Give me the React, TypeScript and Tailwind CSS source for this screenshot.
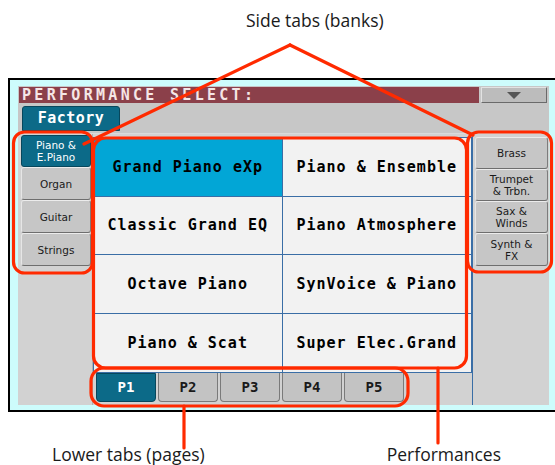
import React from "react";

const mono = { fontFamily: '"DejaVu Sans Mono", "Liberation Mono", monospace' };
const sans = { fontFamily: '"DejaVu Sans", "Liberation Sans", sans-serif' };
const label = { fontFamily: '"Open Sans", "Noto Sans", sans-serif' };

const perfs = [
  ["Grand Piano eXp", "Piano & Ensemble"],
  ["Classic Grand EQ", "Piano Atmosphere"],
  ["Octave Piano", "SynVoice & Piano"],
  ["Piano & Scat", "Super Elec.Grand"],
];

function SideTab({ lines, selected }: { lines: string[]; selected?: boolean }) {
  return (
    <div
      className={
        "flex flex-col items-center justify-center rounded-[3px] border text-[10.5px] leading-[12px] " +
        (selected
          ? "bg-[#0c6a88] border-[#07475c] text-white"
          : "bg-[#c6c6c6] border-t-[#ececec] border-l-[#e6e6e6] border-r-[#7c7c7c] border-b-[#6e6e6e] text-[#1a1a1a]")
      }
      style={sans}
    >
      {lines.map((l) => (
        <span key={l} className="block">
          {l}
        </span>
      ))}
    </div>
  );
}

export default function App() {
  return (
    <div className="relative w-[555px] h-[465px] overflow-hidden bg-white">
      {/* top caption */}
      <div className="h-[78px] pl-[246px] pt-[7px] text-[17.5px] text-[#1a1a1a]" style={label}>
        Side tabs (banks)
      </div>

      {/* screen */}
      <div className="ml-[8px] w-[560px] border-2 border-black bg-[#cdfcfc] pt-[6px] pl-[8px] pb-[5px] pr-[6px]">
        <div className="h-[319px] w-[531px] bg-[#c7c7c7] flex flex-col">
          {/* title row */}
          <div className="flex mt-[1px] ml-[1px] h-[16px]">
            <div
              className="w-[460px] h-full bg-[#8b404a] text-[#f5e6e6] font-bold text-[15px] leading-[16px] pl-[3px] tracking-[3.3px]"
              style={mono}
            >
              PERFORMANCE SELECT:
            </div>
            <div className="ml-[2px] w-[66px] h-full bg-[#bcbcbc] border-t border-l border-[#e2e2e2] border-r border-b border-r-[#6a6a6a] border-b-[#6a6a6a] flex items-center justify-center">
              <svg width="14" height="7" viewBox="0 0 14 7">
                <polygon points="0,0 14,0 7,7" fill="#555" />
              </svg>
            </div>
          </div>

          {/* factory tab row */}
          <div className="mt-[3px] ml-[4px] h-[25px] flex">
            <div
              className="w-[98px] h-full rounded-t-[3px] bg-[#0c6a88] border border-[#07475c] text-white font-bold text-[15px] flex items-center justify-center tracking-[0.5px]"
              style={mono}
            >
              Factory
            </div>
          </div>

          {/* body */}
          <div className="mt-[2px] flex flex-1 border-t border-[#dadada]">
            {/* left column */}
            <div className="w-[75px] bg-[#d2d2d2] border-r border-[#b0b0b0] pl-[3px] pr-[2px] pt-[1px] pb-[3px]">
              <div className="grid grid-rows-[32px_33px_33px_33px] gap-0 w-[70px]">
                <SideTab lines={["Piano &", "E.Piano"]} selected />
                <SideTab lines={["Organ"]} />
                <SideTab lines={["Guitar"]} />
                <SideTab lines={["Strings"]} />
              </div>
            </div>

            {/* center */}
            <div className="w-[379px] flex flex-col bg-[#d2d2d2]">
              <div className="mt-[3px] h-[236px] border border-[#3a6ea6] grid grid-cols-2 grid-rows-4 bg-[#f1f1f1]">
                {perfs.flatMap((row, r) =>
                  row.map((p, c) => (
                    <div
                      key={p}
                      className={
                        "flex items-center justify-center font-bold text-[15px] tracking-[1px] text-black " +
                        (c === 0 ? "border-r border-[#3a6ea6] " : "") +
                        (r < 3 ? "border-b border-[#3a6ea6] " : "") +
                        (r === 0 && c === 0 ? "bg-[#02a6d6]" : "bg-[#f2f2f2]")
                      }
                      style={mono}
                    >
                      {p}
                    </div>
                  ))
                )}
              </div>
              <div className="flex gap-[2px] pl-[3px] h-[29px]">
                {["P1", "P2", "P3", "P4", "P5"].map((p, i) => (
                  <div
                    key={p}
                    className={
                      "w-[60px] h-full rounded-b-[4px] flex items-center justify-center font-bold text-[14px] border " +
                      (i === 0
                        ? "bg-[#0c6a88] border-[#07475c] text-white"
                        : "bg-[#c3c3c3] border-[#7a7a7a] border-t-0 text-[#1a1a1a]")
                    }
                    style={mono}
                  >
                    {p}
                  </div>
                ))}
              </div>
            </div>

            {/* right column */}
            <div className="w-[77px] bg-[#d2d2d2] border-l border-[#3a6ea6] pl-[2px] pt-[3px]">
              <div className="grid grid-rows-[32px_32px_32px_33px] w-[73px]">
                <SideTab lines={["Brass"]} />
                <SideTab lines={["Trumpet", "& Trbn."]} />
                <SideTab lines={["Sax &", "Winds"]} />
                <SideTab lines={["Synth &", "FX"]} />
              </div>
            </div>
          </div>
        </div>
      </div>

      {/* bottom captions */}
      <div className="flex h-[50px] pt-[32px] text-[17.5px] text-[#1a1a1a] leading-[20px]" style={label}>
        <span className="ml-[52px]">Lower tabs (pages)</span>
        <span className="ml-[182px]">Performances</span>
      </div>

      {/* red annotations */}
      <svg className="absolute left-0 top-0 pointer-events-none" width="555" height="465" viewBox="0 0 555 465">
        <g fill="none" stroke="#ff2a00" strokeWidth="3.2" strokeLinecap="round">
          <rect x="13.5" y="132" width="79" height="141" rx="11" />
          <rect x="93.5" y="138" width="373" height="230" rx="12" />
          <rect x="467.5" y="132" width="84" height="140" rx="11" />
          <rect x="91" y="368" width="317" height="38" rx="13" />
          <line x1="290" y1="45" x2="84" y2="144" />
          <line x1="290" y1="45" x2="473" y2="135" />
          <line x1="184" y1="406" x2="184" y2="448" />
          <line x1="438" y1="368" x2="438" y2="443" />
        </g>
      </svg>
    </div>
  );
}
